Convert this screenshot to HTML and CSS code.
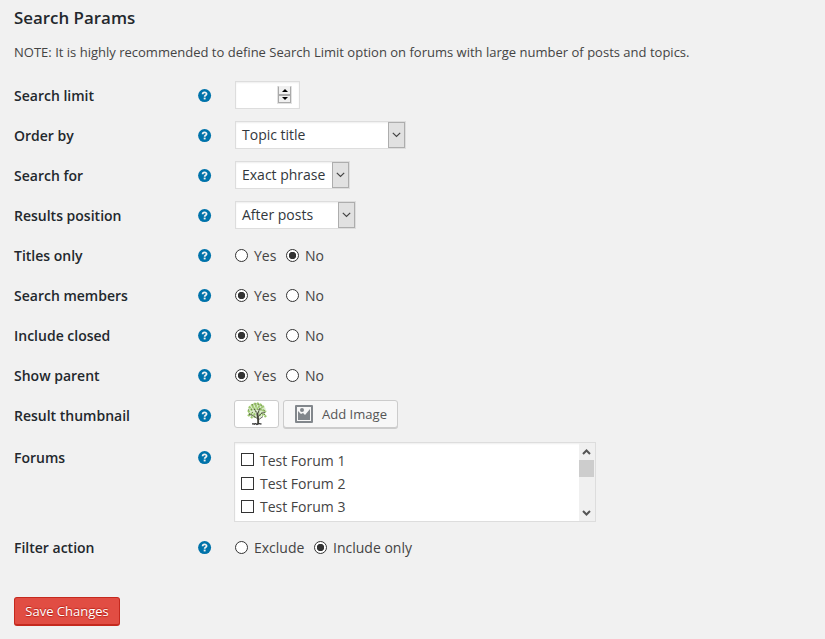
FILE: index.html
```html
<!DOCTYPE html>
<html lang="en">
<head>
<meta charset="utf-8">
<title>Search Params</title>
<link rel="stylesheet" href="styles.css">
</head>
<body>
<svg width="0" height="0" class="defs">
  <symbol id="help" viewBox="0 0 14 14"><g transform="translate(-.4 -.4)"><circle cx="7" cy="7" r="6.5" fill="#0073aa"/><path d="M5 5.6C5 3.3 9.1 3.3 9 5.5C9 6.7 7.1 6.7 7 8.1" fill="none" stroke="#f1f1f1" stroke-width="1.7"/><rect x="6.1" y="9" width="1.9" height="1.8" fill="#f1f1f1"/></g></symbol>
  <symbol id="chev" viewBox="0 0 9 6"><path d="M.8 .8L4.5 4.5L8.2 .8" fill="none" stroke="#444" stroke-width="1.2"/></symbol>
</svg>
<main class="page">
  <h1>Search Params</h1>
  <p class="note">NOTE: It is highly recommended to define Search Limit option on forums with large number of posts and topics.</p>
  <div class="row"><b>Search limit</b><svg class="help"><use href="#help"/></svg><div class="box number"><span class="spin"><i class="up"></i><i class="down"></i></span></div></div>
  <div class="row"><b>Order by</b><svg class="help"><use href="#help"/></svg><div class="box select wide"><span>Topic title</span><i><svg><use href="#chev"/></svg></i></div></div>
  <div class="row"><b>Search for</b><svg class="help"><use href="#help"/></svg><div class="box select phrase"><span>Exact phrase</span><i><svg><use href="#chev"/></svg></i></div></div>
  <div class="row"><b>Results position</b><svg class="help"><use href="#help"/></svg><div class="box select after"><span>After posts</span><i><svg><use href="#chev"/></svg></i></div></div>
  <div class="row"><b>Titles only</b><svg class="help"><use href="#help"/></svg><div class="radios"><i class="radio"></i><span class="yes">Yes</span><i class="radio on"></i><span>No</span></div></div>
  <div class="row"><b>Search members</b><svg class="help"><use href="#help"/></svg><div class="radios"><i class="radio on"></i><span class="yes">Yes</span><i class="radio"></i><span>No</span></div></div>
  <div class="row"><b>Include closed</b><svg class="help"><use href="#help"/></svg><div class="radios"><i class="radio on"></i><span class="yes">Yes</span><i class="radio"></i><span>No</span></div></div>
  <div class="row"><b>Show parent</b><svg class="help"><use href="#help"/></svg><div class="radios"><i class="radio on"></i><span class="yes">Yes</span><i class="radio"></i><span>No</span></div></div>
  <div class="row"><b>Result thumbnail</b><svg class="help"><use href="#help"/></svg>
    <div class="media">
      <span class="thumb"><svg width="22" height="24" viewBox="0 0 22 24">
        <ellipse cx="10.8" cy="8.5" rx="9" ry="7.5" fill="#dcebcc"/>
        <g fill="none" stroke="#9bc66d" stroke-width="2.4" stroke-dasharray="1.8 1.3"><path d="M3 6Q11-3 18 6M2 10Q10 3 20 10M2 14Q6 10 9 13M13 13Q17 11 20 15M5 16Q7 14 9 15M6 5Q11 3 16 6"/></g>
        <g fill="none" stroke="#66843f" stroke-width="1.1" stroke-dasharray="1.2 2"><path d="M6 3Q12 0 17 5M2 8Q10 6 19 9M3 12Q11 7 19 13"/></g>
        <g fill="none" stroke="#44443a" stroke-width=".8"><path d="M12 22C12.6 18 12 15 11.2 11" stroke-width="1.9"/><path d="M12 17L6 13L3 12.5M11.8 15L16 11L19 10.5M11.3 11L8 7M11.5 12L14 6M12.2 18L17 14.5"/></g>
        <path d="M6 21.8H9M8 22.8Q9 20.5 11 22.5Q13 21 15.5 22.2" fill="none" stroke="#333" stroke-width="1.3"/>
      </svg></span>
      <span class="add"><svg width="18" height="18" viewBox="0 0 18 18"><path fill="#82878c" fill-rule="evenodd" d="M1 0H17Q18 0 18 1V17Q18 18 17 18H1Q0 18 0 17V1Q0 0 1 0ZM2 2V16H16V2Z"/><circle cx="7" cy="5" r="2" fill="#82878c"/><path d="M3 15V6L6 9L8 8L10 10L15 4V15Z" fill="#82878c"/></svg>Add Image</span>
    </div>
  </div>
  <div class="row tall"><b>Forums</b><svg class="help"><use href="#help"/></svg>
    <div class="box list">
      <div class="items"><div><i class="check"></i>Test Forum 1</div><div><i class="check low"></i>Test Forum 2</div><div><i class="check low"></i>Test Forum 3</div></div>
      <div class="bar"><svg class="flip" viewBox="0 0 9 6"><path d="M1 1L4.5 4.5L8 1" fill="none" stroke="#555" stroke-width="2"/></svg><i class="handle"></i><svg class="dn" viewBox="0 0 9 6"><path d="M1 1L4.5 4.5L8 1" fill="none" stroke="#555" stroke-width="2"/></svg></div>
    </div>
  </div>
  <div class="row"><b>Filter action</b><svg class="help"><use href="#help"/></svg><div class="radios"><i class="radio"></i><span class="excl">Exclude</span><i class="radio on"></i><span>Include only</span></div></div>
  <button class="save">Save Changes</button>
</main>
</body>
</html>
```
FILE: styles.css
```css
* { box-sizing: border-box; }
body { margin: 0; background: #f1f1f1; color: #444; font: 14px/20px "Open Sans", sans-serif; }
.defs { display: block; }
.page { padding: 8px 14px 0; height: 639px; }
h1 { margin: 0; font-size: 16.9px; line-height: 20px; font-weight: 600; color: #23282d; }
.note { margin: 14px 0; font-size: 13.02px; line-height: 20px; white-space: nowrap; }
.row { display: grid; grid-template-columns: 184px 37px auto; height: 40px; align-items: start; justify-content: start; }
.row > b { padding-top: 10px; font-weight: 600; color: #23282d; }
.help { width: 14px; height: 14px; margin-top: 13px; }
.box { display: flex; background: #fff; border: 1px solid #ddd; box-shadow: inset 0 1px 2px rgba(0,0,0,.07); color: #32373c; }
.number { width: 65px; height: 28px; margin-top: 5px; padding: 4px 7px 4px 6px; justify-content: flex-end; }
.spin { display: flex; flex-direction: column; width: 15px; height: 18px; border: 1px solid #e2e2e2; border-top: 0; }
.spin i { flex: 1; display: flex; align-items: center; justify-content: center; background: #f0f0f0; border: 1px solid #aaa; }
.spin .up { border-top-color: #f0f0f0; }
.spin i::after { content: ""; border: 3px solid transparent; border-top: 0; border-bottom: 3px solid #000; }
.spin .down::after { transform: rotate(180deg); }
.select { height: 28px; margin-top: 5px; justify-content: space-between; line-height: 25px; padding-left: 6px; }
.select i { display: flex; align-items: center; justify-content: center; width: 17px; height: 26px; background: #e1e1e1; border: 1px solid #adadad; }
.select svg { width: 9px; height: 6px; }
.wide { width: 171px; }
.phrase { width: 115px; }
.after { width: 121px; }
.radios { display: flex; padding-top: 10px; }
.radio { width: 13px; height: 13px; margin: 3px 6px 0 0; border: 1px solid #333; border-radius: 50%; background: #fff; }
.radio.on { background: radial-gradient(circle, #333 3.4px, #fff 4px); }
.yes { width: 32px; }
.excl { width: 60px; }
.media { display: flex; gap: 4px; margin: 4px 0 0 -1px; }
.thumb, .add { display: flex; align-items: center; height: 28px; border: 1px solid #ccc; border-radius: 3px; box-shadow: 0 1px 0 #ccc; background: #f7f7f7; color: #555; font-size: 13.05px; }
.thumb { width: 45px; justify-content: center; background: #fff; box-shadow: none; }
.add { width: 115px; padding-left: 11px; gap: 9px; }
.row.tall { height: 92px; padding-top: 2px; }
.list { width: 362px; height: 80px; margin: 4px 0 0 -1px; justify-content: space-between; color: #444; }
.items { padding: 6px 0 0 6px; }
.items div { display: flex; height: 23px; line-height: 23px; }
.check { width: 13px; height: 13px; margin: 4px 6px 0 0; border: 1px solid #333; background: #fff; }
.check.low { margin-top: 5px; }
.bar { width: 16px; height: 78px; background: #f0f0f0; display: flex; flex-direction: column; align-items: center; padding: 6px 1px 5px 0; }
.bar svg { width: 9px; height: 6px; }
.flip { transform: rotate(180deg); }
.handle { width: 15px; height: 17px; margin-top: 5px; background: #cdcdcd; }
.dn { margin-top: auto; }
.save { display: block; width: 106px; height: 29px; margin-top: 29px; padding: 0; border: 1px solid #c5291e; border-bottom-width: 2px; border-radius: 3px; background: #e14d43; color: #fff; font: 13px/26px "Open Sans", sans-serif; text-shadow: 0 -1px 1px #ba281e, 0 1px 1px #ba281e; white-space: nowrap; }
```
